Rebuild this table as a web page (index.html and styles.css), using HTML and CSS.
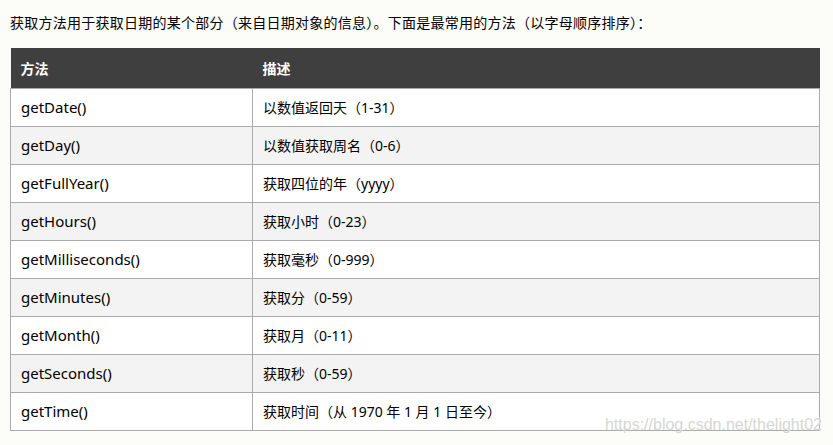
FILE: index.html
```html
<!DOCTYPE html>
<html lang="zh-CN">
<head>
<meta charset="utf-8">
<link rel="stylesheet" href="styles.css">
</head>
<body>
<p class="intro">获取方法用于获取日期的某个部分（来自日期对象的信息）。下面是最常用的方法（以字母顺序排序）：</p>
<table class="ref">
  <thead>
    <tr><th class="c1">方法</th><th>描述</th></tr>
  </thead>
  <tbody>
    <tr><td class="m">getDate()</td><td>以数值返回天（1-31）</td></tr>
    <tr><td class="m">getDay()</td><td>以数值获取周名（0-6）</td></tr>
    <tr><td class="m">getFullYear()</td><td>获取四位的年（yyyy）</td></tr>
    <tr><td class="m">getHours()</td><td>获取小时（0-23）</td></tr>
    <tr><td class="m">getMilliseconds()</td><td>获取毫秒（0-999）</td></tr>
    <tr><td class="m">getMinutes()</td><td>获取分（0-59）</td></tr>
    <tr><td class="m">getMonth()</td><td>获取月（0-11）</td></tr>
    <tr><td class="m">getSeconds()</td><td>获取秒（0-59）</td></tr>
    <tr><td class="m">getTime()</td><td>获取时间（从 1970 年 1 月 1 日至今）</td></tr>
  </tbody>
</table>
<div class="watermark">https://blog.csdn.net/thelight02</div>
</body>
</html>
```
FILE: styles.css
```css
html, body {
  margin: 0;
  padding: 0;
  background: #fcfcf8;
}
body {
  padding: 0 10px;
  font-family: "Noto Sans", "Noto Sans CJK SC", sans-serif;
  font-size: 14px;
  color: #000;
  position: relative;
  height: 445px;
  box-sizing: border-box;
}
.intro {
  margin: 0;
  padding-top: 12px;
  height: 48px;
  line-height: 22px;
  letter-spacing: 0.25px;
  box-sizing: border-box;
}
.ref {
  width: 810px;
  border-collapse: collapse;
  table-layout: fixed;
}
.ref th, .ref td {
  text-align: left;
  padding: 0 10px;
  box-sizing: border-box;
}
.ref th {
  background: #3f3f3f;
  color: #fff;
  font-weight: bold;
  height: 40px;
  border: none;
}
.ref th.c1 { width: 242px; }
.ref td {
  border: 1px solid #aaaaaa;
  background: #ffffff;
  height: 38px;
}
.ref td.m {
  font-size: 15px;
}
.ref tbody tr:nth-child(even) td {
  background: #f3f3f3;
}
.watermark {
  position: absolute;
  right: 11px;
  top: 416px;
  color: #d6d6d3;
  font-family: "Liberation Sans", sans-serif;
  font-size: 16px;
  text-shadow: 0 0 1px #ffffff;
}
```
